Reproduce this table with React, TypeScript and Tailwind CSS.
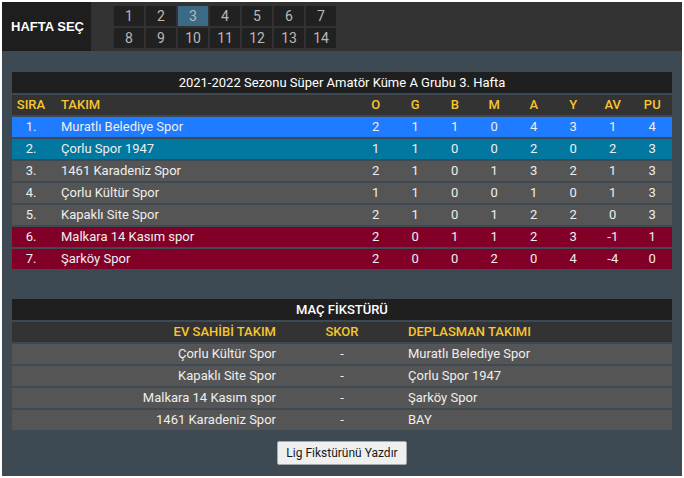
const weeks = [1, 2, 3, 4, 5, 6, 7, 8, 9, 10, 11, 12, 13, 14];

const standings = [
  { no: '1.', team: 'Muratlı Belediye Spor', s: [2, 1, 1, 0, 4, 3, 1, 4], bg: 'bg-[#1f7bff]' },
  { no: '2.', team: 'Çorlu Spor 1947', s: [1, 1, 0, 0, 2, 0, 2, 3], bg: 'bg-[#0278a1]' },
  { no: '3.', team: '1461 Karadeniz Spor', s: [2, 1, 0, 1, 3, 2, 1, 3], bg: 'bg-[#555555]' },
  { no: '4.', team: 'Çorlu Kültür Spor', s: [1, 1, 0, 0, 1, 0, 1, 3], bg: 'bg-[#555555]' },
  { no: '5.', team: 'Kapaklı Site Spor', s: [2, 1, 0, 1, 2, 2, 0, 3], bg: 'bg-[#555555]' },
  { no: '6.', team: 'Malkara 14 Kasım spor', s: [2, 0, 1, 1, 2, 3, -1, 1], bg: 'bg-[#820027]' },
  { no: '7.', team: 'Şarköy Spor', s: [2, 0, 0, 2, 0, 4, -4, 0], bg: 'bg-[#820027]' },
];

const cols = ['O', 'G', 'B', 'M', 'A', 'Y', 'AV', 'PU'];

const fixtures = [
  ['Çorlu Kültür Spor', 'Muratlı Belediye Spor'],
  ['Kapaklı Site Spor', 'Çorlu Spor 1947'],
  ['Malkara 14 Kasım spor', 'Şarköy Spor'],
  ['1461 Karadeniz Spor', 'BAY'],
];

export default function App() {
  return (
    <div className="m-[2px] flex h-[474px] w-[680px] flex-col bg-[#3d4a54] text-[13px] text-[#eeeeee] [font-family:Roboto,'Liberation_Sans',sans-serif]">
      {/* hafta seçimi */}
      <div className="flex h-[49px] bg-[#323232]">
        <div className="flex w-[89px] items-center justify-center bg-[#1e1e1e] pl-[2px] text-[13px] font-bold text-white [font-family:'Liberation_Sans',Arial,sans-serif]">
          HAFTA SEÇ
        </div>
        <div className="ml-[23px] mt-[4px] grid grid-cols-[repeat(7,30px)] gap-[2px] self-start">
          {weeks.map((w) => (
            <div
              key={w}
              className={`flex h-[20px] items-center justify-center text-[14px] text-[#b8b8b8] ${w === 3 ? 'bg-[#3b6a86]' : 'bg-[#212121]'}`}
            >
              {w}
            </div>
          ))}
        </div>
      </div>

      <div className="flex flex-1 flex-col px-[10px] pt-[21px]">
        {/* puan durumu */}
        <div className="flex flex-col gap-[2px]">
          <div className="flex h-[21px] items-center justify-center bg-[#1f1f1f] text-white">
            2021-2022 Sezonu Süper Amatör Küme A Grubu 3. Hafta
          </div>
          <div className="flex h-[20px] items-center bg-[#333333] font-medium text-[#f7c62f]">
            <div className="w-[38px] text-center">SIRA</div>
            <div className="flex-1 pl-[11px]">TAKIM</div>
            {cols.map((c) => (
              <div key={c} className="w-[39.5px] text-center">
                {c}
              </div>
            ))}
          </div>
          {standings.map((r) => (
            <div key={r.no} className={`flex h-[20px] items-center ${r.bg}`}>
              <div className="w-[38px] text-center">{r.no}</div>
              <div className="flex-1 pl-[11px]">{r.team}</div>
              {r.s.map((v, i) => (
                <div key={i} className="w-[39.5px] text-center">
                  {v}
                </div>
              ))}
            </div>
          ))}
        </div>

        {/* fikstür */}
        <div className="mt-[30px] flex flex-col gap-[2px]">
          <div className="flex h-[21px] items-center justify-center bg-[#1f1f1f] font-medium text-white">
            MAÇ FİKSTÜRÜ
          </div>
          <div className="flex h-[20px] items-center bg-[#333333] font-medium text-[#f7c62f]">
            <div className="w-[268px] pr-[4px] text-right">EV SAHİBİ TAKIM</div>
            <div className="w-[124px] text-center">SKOR</div>
            <div className="flex-1 pl-[4px]">DEPLASMAN TAKIMI</div>
          </div>
          {fixtures.map(([home, away]) => (
            <div key={home} className="flex h-[20px] items-center bg-[#555555]">
              <div className="w-[268px] pr-[4px] text-right">{home}</div>
              <div className="w-[124px] text-center">-</div>
              <div className="flex-1 pl-[4px]">{away}</div>
            </div>
          ))}
        </div>

        <div className="mt-[11px] flex justify-center">
          <button className="h-[24px] rounded-[2px] border border-[#a9a9a9] bg-[#efefef] px-[8px] text-[12px] text-[#1a1a1a] [font-family:Roboto,'Liberation_Sans',sans-serif]">
            Lig Fikstürünü Yazdır
          </button>
        </div>
      </div>
    </div>
  );
}
